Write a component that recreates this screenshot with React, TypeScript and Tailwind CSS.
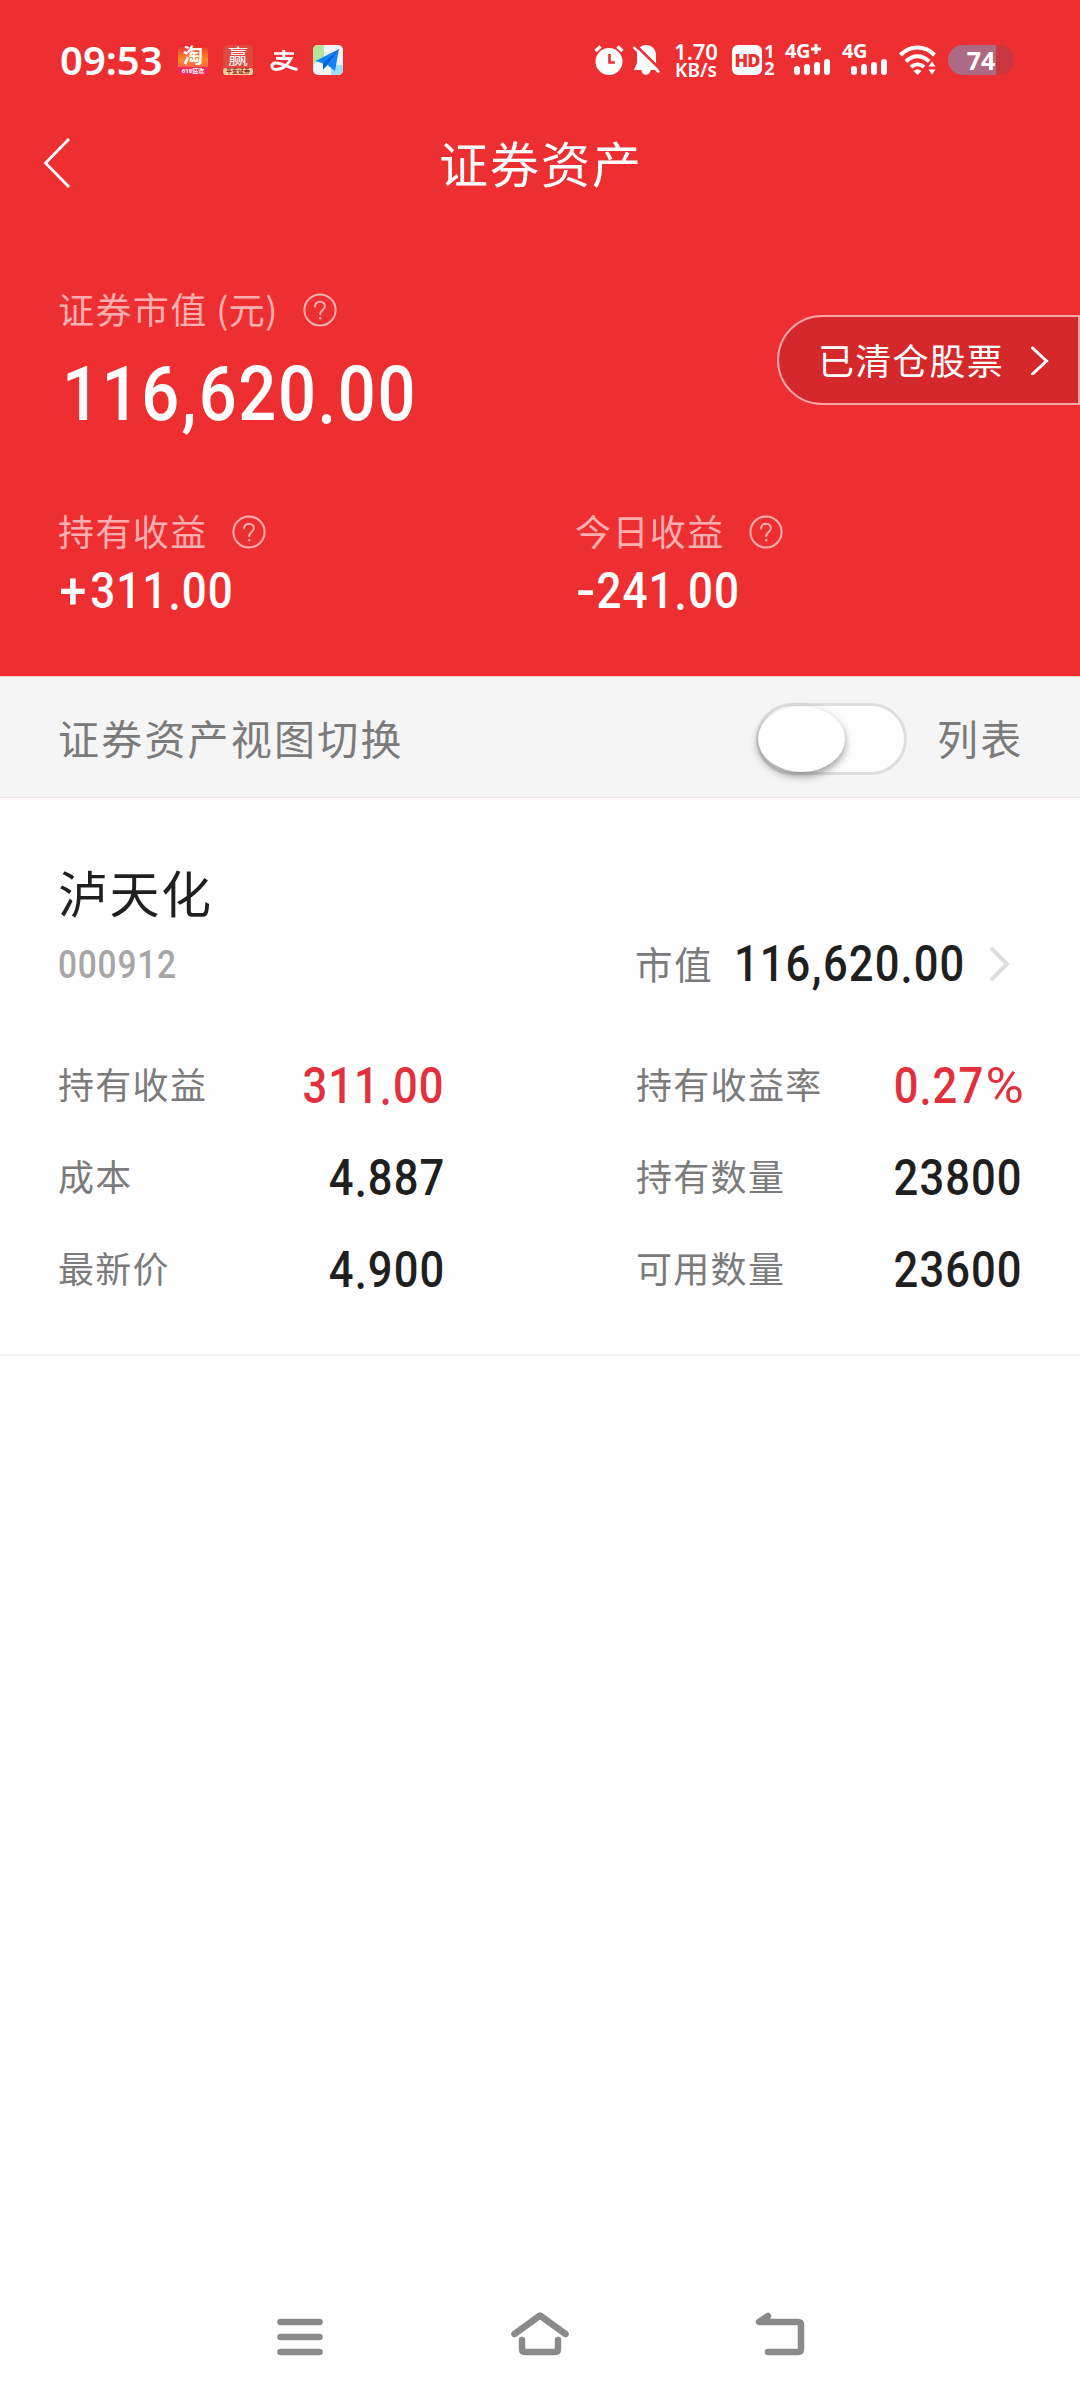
import React from 'react';

// DIN-like digits: Roboto squeezed a little, with looser tracking
const Num: React.FC<{ value: string; className?: string }> = ({ value, className = '' }) => (
  <span className={`inline-block scale-x-[0.88] font-[Roboto,sans-serif] font-medium leading-none tracking-[0.024em] whitespace-nowrap ${className}`}>
    {value.split(/([.,%+-])/).map((part, i) => {
      if (part === '.') return <span key={i} className="relative top-[0.04em]">{part}</span>;
      if (part === ',') return <span key={i} className="relative top-[0.04em] mx-[0.01em]">{part}</span>;
      if (part === '%') return <span key={i} className="mr-[0.06em] ml-[0.1em] inline-block scale-x-[1.2] font-normal tracking-normal">{part}</span>;
      if (part === '+') return <span key={i} className="mr-[0.1em] ml-[0.03em] inline-block scale-x-[1.1]">{part}</span>;
      if (part === '-') return <span key={i} className="mr-[0.1em] inline-block origin-left scale-x-[1.3]">{part}</span>;
      return part;
    })}
  </span>
);

const Help: React.FC = () => (
  <svg className="shrink-0" width="34" height="34" viewBox="0 0 34 34" fill="none" stroke="#ffaeb0" strokeWidth="2">
    <circle cx="17" cy="17" r="15.6" />
    <path d="M12 13.6c0-3 2.2-4.9 5-4.9s4.9 1.9 4.9 4.5c0 3.600-4.700 4-4.700 8" strokeLinecap="round" />
    <circle cx="17.2" cy="25.2" r="0.9" fill="#ffaeb0" strokeWidth="1" />
  </svg>
);

const Signal: React.FC<{ label: string; plus?: boolean }> = ({ label, plus }) => (
  <div className="flex h-[32px] w-[45px] shrink-0 flex-col justify-between pb-[1px]">
    <div className="flex h-[14px] items-center text-[20px] leading-[14px] font-bold tracking-[-0.5px]">
      {label}
      {plus && (
        <svg className="mt-[-4px] ml-[1px]" width="10" height="10" viewBox="0 0 10 10" stroke="#fff" strokeWidth="3">
          <path d="M5 0V10M0 5H10" />
        </svg>
      )}
    </div>
    <div className="flex items-end justify-end gap-[4px]">
      <i className="h-[9px] w-[6px] rounded-[3px] bg-white" />
      <i className="h-[11px] w-[6px] rounded-[3px] bg-white" />
      <i className="h-[13px] w-[6px] rounded-[3px] bg-white" />
      <i className="h-[16px] w-[6px] rounded-[3px] bg-white" />
    </div>
  </div>
);

const StatusBar: React.FC = () => (
  <div className="flex h-[120px] items-center pl-[60px] font-['Noto_Sans','Noto_Sans_CJK_SC',sans-serif] text-white">
    <span className="w-[118px] text-[40px] leading-none font-semibold">09:53</span>
    <div className="flex h-[30px] w-[30px] shrink-0 flex-col items-center rounded-[5px] bg-gradient-to-b from-[#f0162c] via-[#f98a2c] to-[#f4204f]">
      <span className="h-[22px] text-[20px] leading-[22px] font-bold">淘</span>
      <span className="w-full rounded-b-[5px] bg-[#f02a5c] text-center text-[6px] leading-[8px] font-bold">618狂欢</span>
    </div>
    <div className="ml-[15px] flex h-[30px] w-[30px] shrink-0 flex-col items-center rounded-[5px] bg-[#e2483d]">
      <span className="h-[23px] text-[20px] leading-[23px]">赢</span>
      <span className="w-[30px] rounded-[3px] bg-[#f6cfa0] text-center text-[6px] leading-[7px] font-bold text-[#8a2a1c]">平安证券</span>
    </div>
    <svg className="ml-[16px] shrink-0" width="30" height="30" viewBox="0 0 30 30" fill="none" stroke="#fff">
      <path d="M5 8.500H25" strokeWidth="2.600" />
      <path d="M14.800 5V13" strokeWidth="3" />
      <path d="M7 13.500H22C19.500 19 14 24.500 7 24.500C1.500 24.500 1.500 18 7 18C14 18 19 23 28.500 24.500" strokeWidth="2.800" />
    </svg>
    <svg className="ml-[14px] shrink-0" width="30" height="30" viewBox="0 0 30 30">
      <rect width="30" height="30" rx="5" fill="#f0f3f7" />
      <path d="M5 0H11V14L0 19V5Q0 0 5 0Z" fill="#b4e59a" />
      <path d="M18 20H30V25Q30 30 25 30H18Z" fill="#9be0f7" />
      <path d="M26 4L2.500 16L10 18.500V24.500L14.500 20L22 26Z" fill="#1683f8" />
      <path d="M26 4L10 18.500V24.500L14 20Z" fill="#0b5fd6" />
    </svg>

    <svg className="ml-[251px] shrink-0" width="30" height="32" viewBox="0 0 30 32">
      <circle cx="15" cy="17.500" r="13.500" fill="#fff" />
      <path d="M1.500 7L6.500 2.500M28.500 7L23.500 2.500" stroke="#fff" strokeWidth="3.200" />
      <path d="M15.500 10V18.500H21" stroke="#ed2f32" strokeWidth="2.600" fill="none" />
    </svg>
    <svg className="ml-[8px] shrink-0" width="29" height="32" viewBox="0 0 29 32">
      <path d="M14 1C20 1 24 5.500 24 11V19L27 26H2L5 19V11C5 5.500 8.500 1 14 1Z" fill="#fff" />
      <path d="M9.500 26H18.500A4.500 4.800 0 0 1 9.500 26Z" fill="#fff" />
      <path d="M3.500 1L30 27" stroke="#ed2f32" strokeWidth="2.500" />
      <path d="M1.500 3L27 28.500" stroke="#fff" strokeWidth="2.400" />
    </svg>
    <div className="ml-[12px] flex w-[46px] shrink-0 flex-col items-center leading-[19px] font-semibold">
      <span className="text-[22px]">1.70</span>
      <span className="text-[19px] leading-[18px]">KB/s</span>
    </div>
    <div className="ml-[13px] flex h-[30px] w-[30px] shrink-0 items-center justify-center rounded-[6px] bg-white text-[18px] leading-none font-black tracking-[-1px] text-[#ed2f32]">HD</div>
    <div className="ml-[2px] flex w-[11px] shrink-0 flex-col items-center text-[18px] leading-[17px] font-bold">
      <span>1</span>
      <span>2</span>
    </div>
    <div className="ml-[10px] flex gap-[12px]">
      <Signal label="4G" plus />
      <Signal label="4G" />
    </div>
    <svg className="ml-[12px] shrink-0" width="38" height="32" viewBox="0 0 38 32" fill="none" stroke="#fff" strokeWidth="4">
      <path d="M1.500 11C11 1 26 1 35.500 11" />
      <path d="M7 17.500C14 10.500 23 10.500 30 17.500" />
      <path d="M12 23C16 19.500 21 19.500 25 23" />
      <path d="M14.500 27Q18.500 23.500 22.500 27L18.500 31Z" fill="#fff" stroke="none" />
      <path d="M29.500 22.500L33 17.500L36.500 22.500ZM29.500 25.500L33 30.500L36.500 25.500Z" fill="#fff" stroke="none" />
    </svg>
    <div className="ml-[11px] flex h-[30px] w-[66px] shrink-0 items-center justify-center rounded-full bg-gradient-to-r from-[#ad6a82] from-73% to-[#c8363f] to-73% text-[25px] leading-[30px] font-bold">74</div>
  </div>
);

const Row: React.FC<{ label: string; value: string; red?: boolean }> = ({ label, value, red }) => (
  <div className="flex h-[92px] items-center justify-between">
    <span className="relative -top-[2px] -left-[1px] text-[36px] tracking-[1.300px] text-[#7b7b7b]">{label}</span>
    <Num value={value} className={`mt-[3px] mr-[-2px] origin-right text-[49.500px] ${red ? 'text-[#e2313c]' : 'text-[#1f1f1f]'}`} />
  </div>
);

const Profit: React.FC<{ label: string; value: string }> = ({ label, value }) => (
  <div className="w-[517px] shrink-0">
    <div className="flex h-[60px] items-center">
      <span className="relative -top-[2px] -left-[1px] w-[173px] text-[36px] tracking-[1.400px] text-[#ffaeb0]">{label}</span>
      <Help />
    </div>
    <div className="flex h-[58px] items-center">
      <Num value={value} className="origin-left text-[50px] text-white" />
    </div>
  </div>
);

const App: React.FC = () => {
  return (
    <div className="flex h-[2400px] w-[1080px] flex-col overflow-hidden bg-[#fefefe] font-['Noto_Sans_CJK_SC',sans-serif] leading-none">
      <header className="h-[676px] bg-[#ed2f32]">
        <StatusBar />
        <div className="grid h-[86px] grid-cols-[200px_1fr_200px] items-center">
          <svg className="ml-[42px]" width="30" height="52" viewBox="0 0 30 52" fill="none" stroke="#fff" strokeWidth="2.800">
            <path d="M27 2L3.500 26L27 50" />
          </svg>
          <h1 className="relative -top-[2px] left-[1px] text-center text-[49px] tracking-[2px] text-white">证券资产</h1>
        </div>
        <div className="flex items-start justify-between pt-[74px] pl-[59px]">
          <div>
            <div className="flex h-[60px] items-center">
              <span className="relative -top-[2px] -left-[1px] w-[244px] text-[36px] tracking-[1.400px] whitespace-pre text-[#ffaeb0]">
                证券市值<span className="tracking-[0.500px]"> (元)</span>
              </span>
              <Help />
            </div>
            <div className="flex h-[108px] items-center">
              <Num value="116,620.00" className="ml-[3px] origin-left text-[76px] text-white" />
            </div>
          </div>
          <button className="mt-[35px] flex h-[90px] w-[303px] items-center rounded-l-full border-2 border-[#f8a5a7] bg-[#d4282b] pl-[39px]">
            <span className="relative -top-[1px] w-[212px] text-left text-[36px] tracking-[1.200px] text-white">已清仓股票</span>
            <svg width="20" height="30" viewBox="0 0 20 30" fill="none" stroke="#fff" strokeWidth="3" strokeLinecap="round">
              <path d="M2.500 3L16.500 16L2.500 29" />
            </svg>
          </button>
        </div>
        <div className="mt-[54px] flex pl-[59px]">
          <Profit label="持有收益" value="+311.00" />
          <Profit label="今日收益" value="-241.00" />
        </div>
      </header>

      <div className="flex h-[122px] items-center border-y border-t-[#f7c9ca] border-b-[#f0dede] bg-[#f5f5f5] pl-[58px] text-[41px] tracking-[2.200px] text-[#7b7b7b]">
        <span className="w-[698px]">证券资产视图切换</span>
        <div className="mt-[3px] flex h-[72px] w-[151px] items-center rounded-full border-[3px] border-[#dedede] bg-[#fdfdfd]">
          <div className="-ml-[1px] h-[66px] w-[87px] shrink-0 rounded-[50%] bg-white shadow-[0_4px_8px_rgba(0,0,0,0.4)]" />
        </div>
        <span className="ml-[30px]">列表</span>
      </div>

      <section className="h-[558px] border-b-2 border-[#f5f5f5] px-[59px] pt-[58px]">
        <h2 className="-ml-[1px] flex h-[70px] items-center text-[50px] tracking-[1.500px] text-[#1f1f1f]">泸天化</h2>
        <div className="mt-[2px] flex h-[72px] items-center">
          <Num value="000912" className="mt-[1px] -ml-[1px] w-[577px] origin-left text-[38px] text-[#a6a6a6]" />
          <span className="relative -top-[1px] w-[99px] text-[37.500px] tracking-[1.800px] text-[#7b7b7b]">市值</span>
          <Num value="116,620.00" className="mt-[2px] w-[254px] origin-left text-[49.500px] text-[#1f1f1f]" />
          <svg width="24" height="36" viewBox="0 0 24 36" fill="none" stroke="#dedede" strokeWidth="4" strokeLinecap="round">
            <path d="M4 3L19 18L4 33" />
          </svg>
        </div>
        <div className="mt-[39px] grid grid-cols-[384px_384px] justify-between">
          <Row label="持有收益" value="311.00" red />
          <Row label="持有收益率" value="0.27%" red />
          <Row label="成本" value="4.887" />
          <Row label="持有数量" value="23800" />
          <Row label="最新价" value="4.900" />
          <Row label="可用数量" value="23600" />
        </div>
      </section>

      <nav className="mt-auto flex h-[126px] items-center pl-[275px]">
        <svg width="50" height="50" viewBox="0 0 50 50" stroke="#8a8a8a" strokeWidth="6.500" strokeLinecap="round">
          <path d="M5.500 10H44.500M5.500 25H44.500M5.500 40H44.500" />
        </svg>
        <svg className="ml-[185px]" width="60" height="50" viewBox="0 0 60 50" fill="none" stroke="#8a8a8a" strokeWidth="6.500" strokeLinecap="round" strokeLinejoin="round">
          <path d="M4.500 22L30 3.500L55.500 22" />
          <path d="M12 28V37Q12 40 15 40H45Q48 40 48 37V28" />
        </svg>
        <svg className="ml-[184px]" width="54" height="50" viewBox="0 0 54 50" fill="none" stroke="#8a8a8a" strokeWidth="6.500" strokeLinecap="round" strokeLinejoin="round">
          <path d="M14 4L5 10H44Q47 10 47 13V37Q47 40 44 40H14" />
        </svg>
      </nav>
    </div>
  );
};

export default App;
